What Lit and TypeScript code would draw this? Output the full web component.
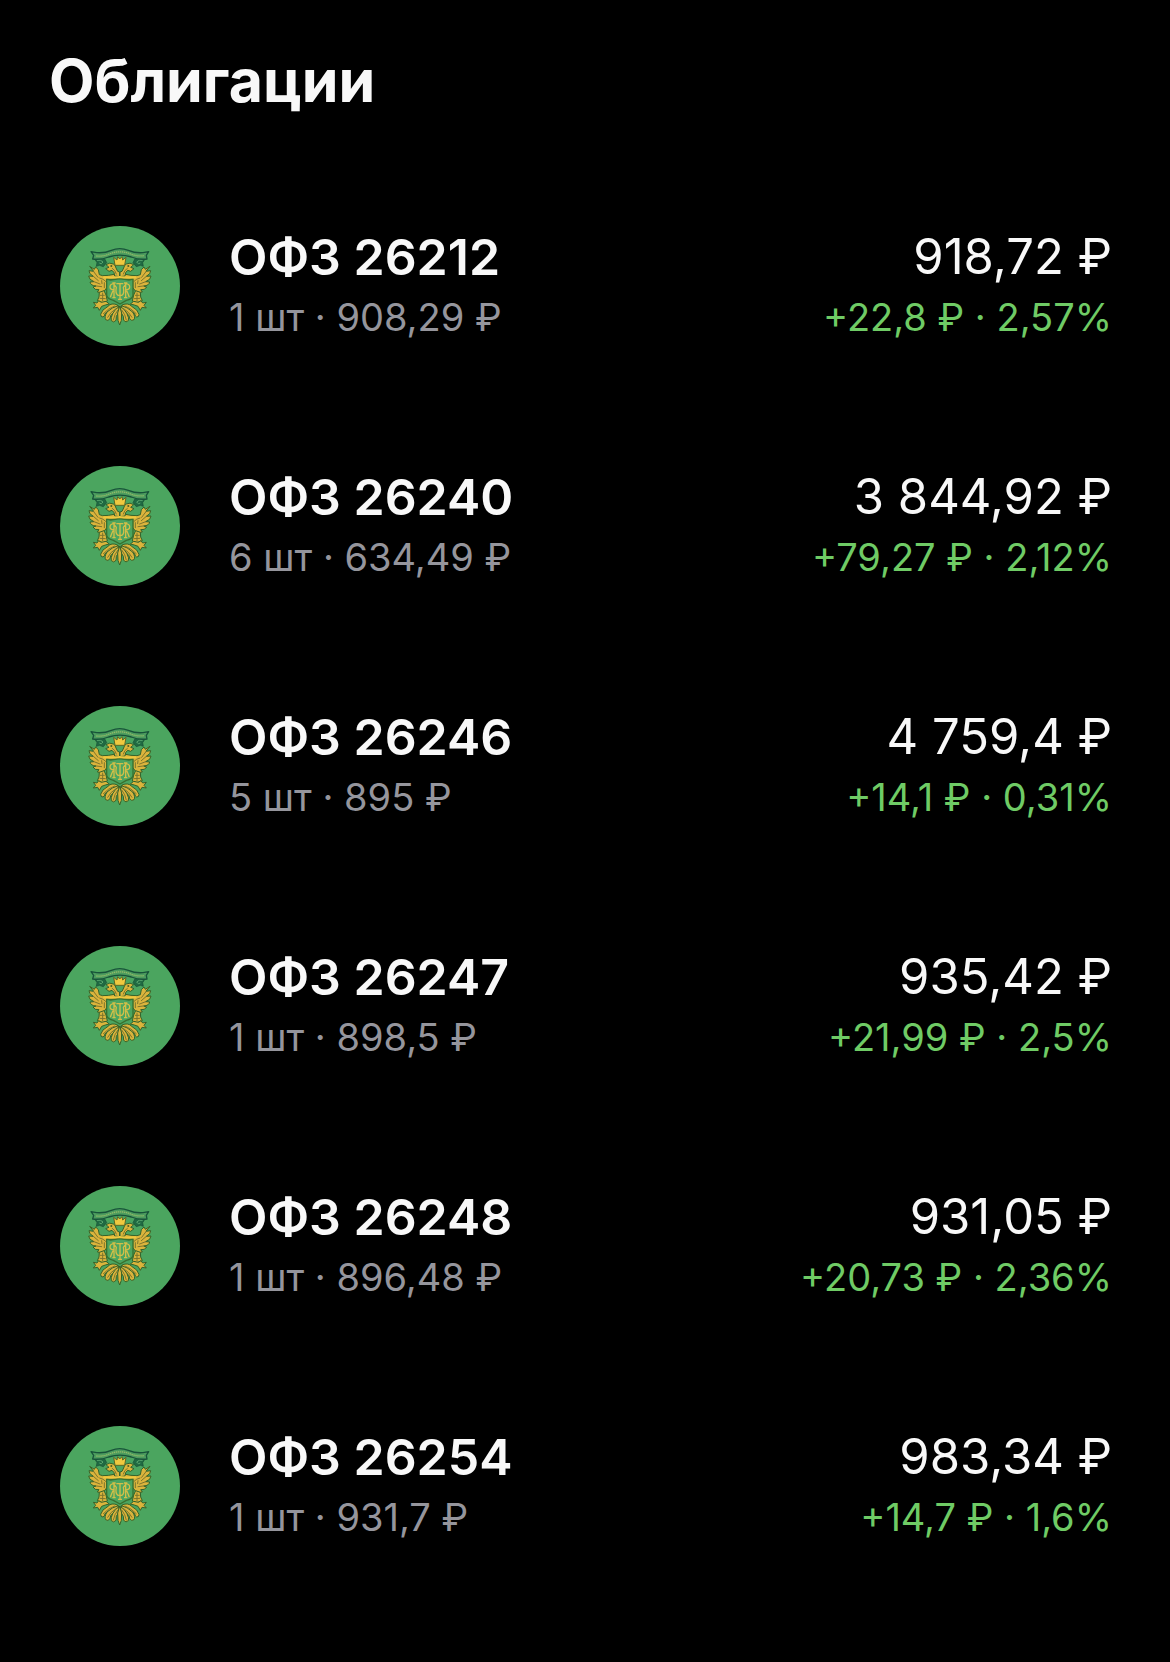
import { LitElement, html, css, svg } from "lit";
import { customElement, property } from "lit/decorators.js";

interface Bond {
  name: string;
  holding: string;
  total: string;
  gain: string;
}

const BONDS: Bond[] = [
  { name: "ОФЗ 26212", holding: "1 шт · 908,29 ₽", total: "918,72 ₽", gain: "+22,8 ₽ · 2,57%" },
  { name: "ОФЗ 26240", holding: "6 шт · 634,49 ₽", total: "3 844,92 ₽", gain: "+79,27 ₽ · 2,12%" },
  { name: "ОФЗ 26246", holding: "5 шт · 895 ₽", total: "4 759,4 ₽", gain: "+14,1 ₽ · 0,31%" },
  { name: "ОФЗ 26247", holding: "1 шт · 898,5 ₽", total: "935,42 ₽", gain: "+21,99 ₽ · 2,5%" },
  { name: "ОФЗ 26248", holding: "1 шт · 896,48 ₽", total: "931,05 ₽", gain: "+20,73 ₽ · 2,36%" },
  { name: "ОФЗ 26254", holding: "1 шт · 931,7 ₽", total: "983,34 ₽", gain: "+14,7 ₽ · 1,6%" },
];

// Left half of the eagle; the right half is the same drawing mirrored.
const eagleHalf = () => svg`
  <path class="under" d="M132 126 L164 128 L170 140 L160 152 L148 148 L139 151 L141 140 Z" />
  <path class="curl" d="M141 133 Q152 130 159 138 Q154 147 148 141" />
  <path class="gold" d="M119 151 L131 166 L117 164 Q116 173 130 181 L116 180 Q116 191 132 197 L120 198 Q122 209 138 210 L129 213 Q134 223 147 221 L142 228 Q154 233 163 225 L171 214 L171 190 L209 189 L209 177 L192 175 L176 178 L158 179 L148 176 L145 161 L137 153 L133 160 Z" />
  <path class="feather" d="M131 167 L144 184 M130 181 L145 194 M132 197 L150 204 M139 210 L155 212 M149 186 Q160 188 167 196 M155 194 L156 203 M163 200 V215" />
  <path class="gold" d="M167 158 L177 154 L168 146 Q179 138 190 144 Q197 148 198 156 L203 166 L209 168 V182 L194 180 Q194 168 186 163 L177 166 Z" />
  <circle class="eye" cx="184" cy="150" r="3" />
  <path class="feather" d="M187 157 Q196 162 199 174" />
  <path class="gold" d="M148 229 L162 224 L168 237 L172 255 L159 260 L142 254 L147 243 Z" />
  <path class="feather" d="M151 238 L163 238 M150 247 L166 248 M158 231 V254" />
  <path class="gold" d="M168 256 L154 259 L146 254 L141 261 L130 259 L137 268 L130 276 L143 274 L148 283 L155 271 L166 267 L178 264 Z" />
  <path class="gold" d="M203 267 Q184 259 174 271 Q155 281 152 295 Q152 304 159 303 Q164 301 165 293 Q180 280 203 272 Z" />
  <path class="gold" d="M205 269 Q187 273 171 288 Q162 303 167 311 Q174 317 180 308 L182 299 Q195 285 205 276 Z" />
  <path class="gold" d="M207 272 Q195 279 188 293 Q181 307 184 314 Q191 322 198 313 L199 301 L207 288 Z" />
  <path class="feather" d="M160 293 Q175 277 194 270 M173 304 Q181 288 198 278 M190 312 Q193 295 203 283" />
`;

@customElement("bond-emblem")
export class BondEmblem extends LitElement {
  static styles = css`
    :host { display: block; }
    .emblem { display: block; width: 100%; height: auto; }
    .disc { fill: #4ba55f; }
    .gold { fill: #dbb43c; stroke: #35622a; stroke-width: 3; stroke-linejoin: round; }
    .feather { fill: none; stroke: #7d762d; stroke-width: 3; stroke-linecap: round; }
    .eye { fill: #4c5d20; }
    .under { fill: #1f6a42; stroke: #184f35; stroke-width: 2; }
    .curl { fill: none; stroke: #5ba770; stroke-width: 3; }
    .ribbon { fill: #4c9c5e; stroke: #18543a; stroke-width: 4; stroke-linejoin: round; }
    .motto { fill: none; stroke: #94bb68; stroke-width: 4; stroke-dasharray: 4 2; }
    .crown { fill: #efc83f; stroke: #5c6826; stroke-width: 3; stroke-linejoin: round; }
    .shield { fill: #4ba55f; stroke: #39702f; stroke-width: 4; stroke-linejoin: round; }
    .yoke { fill: none; stroke: #efc83f; stroke-width: 6; }
    .cipher { fill: none; stroke: #d2bf48; stroke-width: 4; stroke-linejoin: round; }
  `;

  render() {
    return html`
      <svg class="emblem" viewBox="30 30 360 360" aria-hidden="true">
        <circle class="disc" cx="210" cy="210" r="180" />
        <g>${eagleHalf()}</g>
        <g transform="matrix(-1 0 0 1 419 0)">${eagleHalf()}</g>
        <path class="gold" d="M209 270 L215 291 L214 313 L209 327 L204 313 L203 291 Z" />
        <path class="ribbon" d="M123 107 L140 110 Q164 112 184 103 Q209 93 235 103 Q256 112 279 110 L296 107 L289 118 L291 129 Q266 132 244 123 Q210 112 176 123 Q154 132 128 129 L131 118 Z" />
        <path class="motto" d="M139 120 Q159 122 178 114 Q210 101 242 114 Q262 122 282 119" />
        <path class="crown" d="M195 148 L191 124 L201 132 L203 122 L209 129 L216 122 L218 132 L228 124 L224 148 Z" />
        <path class="shield" d="M170 189 L182 192 L209 188 L237 192 L249 189 L249 238 Q247 249 229 253 L210 264 L190 253 Q173 249 170 238 Z" />
        <path class="yoke" d="M160 184 Q187 186 209 183 Q231 186 259 184" />
        <path class="cipher" d="M192 201 V245 M192 203 Q180 204 180 213 Q180 221 192 222 M190 222 Q185 232 181 244 M227 201 V245 M227 203 Q239 204 239 213 Q239 221 227 222 M229 222 Q234 232 238 244 M187 201 H197 M187 245 H197 M222 201 H232 M222 245 H232 M199 203 H220 M210 201 V250 M192 205 L199 214 Q195 232 204 238 H216 Q224 232 220 214 L227 205 M204 250 H216" />
      </svg>
    `;
  }
}

@customElement("bond-row")
export class BondRow extends LitElement {
  @property({ attribute: false }) bond!: Bond;

  static styles = css`
    :host { display: block; }
    .row {
      display: grid;
      grid-template-columns: 120px 1fr auto;
      column-gap: 49px;
      align-items: center;
    }
    .side { display: flex; flex-direction: column; gap: 4px; padding-bottom: 2px; white-space: nowrap; }
    .end { text-align: right; }
    .name, .total { margin: 0; line-height: 60px; color: #f8f8f8; }
    .name { font-size: 50px; font-weight: 600; }
    .total { font-size: 49px; font-weight: 400; }
    .holding, .gain { margin: 0; font-size: 38px; line-height: 52px; }
    .holding { color: #95959c; }
    .gain { color: #6fcb65; }
  `;

  render() {
    const { name, holding, total, gain } = this.bond;
    return html`
      <article class="row">
        <bond-emblem></bond-emblem>
        <div class="side">
          <h2 class="name">${name}</h2>
          <p class="holding">${holding}</p>
        </div>
        <div class="side end">
          <p class="total">${total}</p>
          <p class="gain">${gain}</p>
        </div>
      </article>
    `;
  }
}

@customElement("app-root")
export class AppRoot extends LitElement {
  static styles = css`
    :host {
      display: block;
      min-height: 100vh;
      box-sizing: border-box;
      padding: 43px 58px 116px 60px;
      background: #000;
      font-family: Inter, "Liberation Sans", sans-serif;
    }
    .title {
      margin: 0 -11px;
      font-size: 59px;
      line-height: 76px;
      font-weight: 700;
      color: #f8f8f8;
    }
    .list {
      display: flex;
      flex-direction: column;
      gap: 120px;
      margin: 0;
      padding: 107px 0 0;
      list-style: none;
    }
    .item { min-height: 120px; display: grid; align-items: center; }
  `;

  render() {
    return html`
      <main>
        <h1 class="title">Облигации</h1>
        <ul class="list">
          ${BONDS.map((bond) => html`<li class="item"><bond-row .bond=${bond}></bond-row></li>`)}
        </ul>
      </main>
    `;
  }
}
